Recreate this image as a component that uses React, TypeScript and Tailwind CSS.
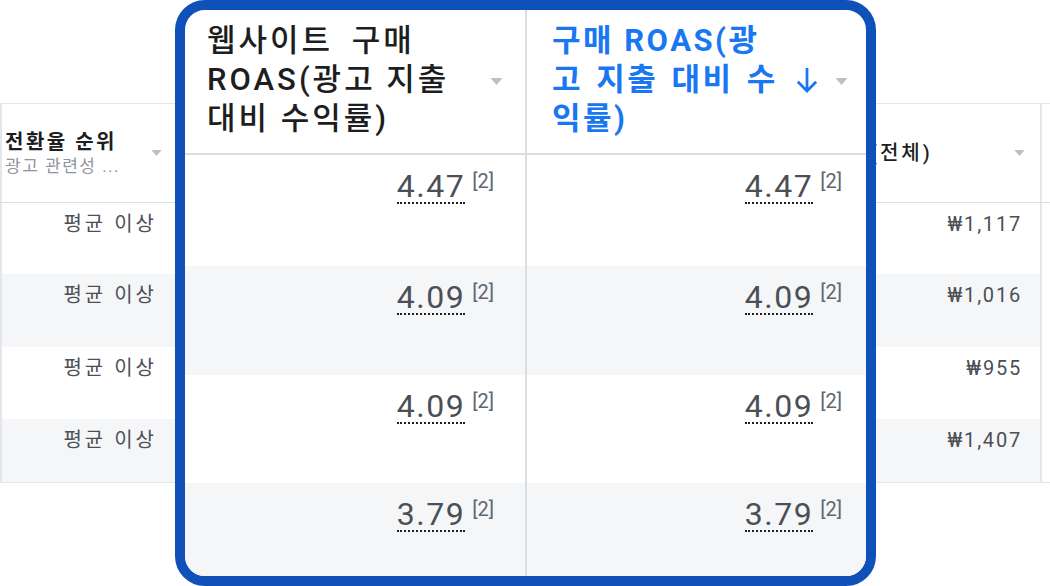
import React from "react";

type BgRow = { rank: string; cost: string; gray: boolean; h: string };
type ZoomRow = { value: string; gray: boolean; h: string };

const bgRows: BgRow[] = [
  { rank: "평균 이상", cost: "₩1,117", gray: false, h: "h-[71px]" },
  { rank: "평균 이상", cost: "₩1,016", gray: true, h: "h-[73px]" },
  { rank: "평균 이상", cost: "₩955", gray: false, h: "h-[72px]" },
  { rank: "평균 이상", cost: "₩1,407", gray: true, h: "h-[63px]" },
];

const zoomRows: ZoomRow[] = [
  { value: "4.47", gray: false, h: "h-[111px]" },
  { value: "4.09", gray: true, h: "h-[109px]" },
  { value: "4.09", gray: false, h: "h-[108px]" },
  { value: "3.79", gray: true, h: "flex-1" },
];

function Caret({ className }: { className?: string }) {
  return (
    <svg viewBox="0 0 12 7" className={className}>
      <path d="M0 0 L12 0 L6 7 Z" fill="#bcc0c4" />
    </svg>
  );
}

function Value({ value }: { value: string }) {
  return (
    <span className="flex items-start">
      <span className="inline-block leading-[31px] text-[32px] tracking-[1.5px] text-[#4b4f56] border-b-2 border-dotted border-[#1c1e21]">
        {value}
      </span>
      <span className="ml-[7px] text-[20px] leading-[22px] text-[#606770] -mt-[1px]">[2]</span>
    </span>
  );
}

export default function App() {
  return (
    <div className="relative w-[1050px] h-[586px] overflow-hidden bg-white font-['Roboto','Noto_Sans_CJK_KR',sans-serif]">
      {/* table behind the zoomed part */}
      <div className="pt-[103px]">
        <div className="w-[1050px] border-t border-b border-[#e4e6eb]">
          <div className="flex h-[99px] border-b border-[#dadde1]">
            <div className="w-[178px] border-l-2 border-[#e4e6eb] flex items-center pl-[3px] pr-[16px]">
              <div className="flex-1">
                <div className="text-[20px] leading-[25px] font-bold tracking-[2.5px] text-[#1c1e21]">전환율 순위</div>
                <div className="text-[17px] leading-[22px] tracking-[1.5px] text-[#90949c]">광고 관련성 ...</div>
              </div>
              <Caret className="w-[11px] h-[6px]" />
            </div>
            <div className="w-[690px]" />
            <div className="w-[174px] border-r-2 border-[#e4e6eb] flex items-center pl-[2px] pr-[15px]">
              <div className="flex-1 text-[20px] font-medium tracking-[3px] text-[#1c1e21]">(전체)</div>
              <Caret className="w-[11px] h-[6px]" />
            </div>
            <div className="flex-1" />
          </div>
          {bgRows.map((r, i) => (
            <div key={i} className={`flex ${r.h} ${r.gray ? "bg-[#f5f6f7]" : "bg-white"}`}>
              <div className="w-[178px] border-l-2 border-[#e4e6eb] pr-[21px] pt-[9px] text-right text-[20px] leading-[24px] tracking-[3px] text-[#4b4f56]">
                {r.rank}
              </div>
              <div className="w-[690px]" />
              <div className="w-[174px] border-r-2 border-[#e4e6eb] pr-[18px] pt-[9px] text-right text-[20px] leading-[24px] tracking-[1.8px] text-[#4b4f56]">
                {r.cost}
              </div>
              <div className="flex-1 bg-white" />
            </div>
          ))}
        </div>
      </div>

      {/* zoomed ROAS columns */}
      <div className="absolute left-[175px] top-0 w-[701px] h-[586px] flex flex-col rounded-[30px] border-[10px] border-[#0f50b9] bg-white overflow-hidden">
        <div className="flex h-[145px] border-b-2 border-[#dadde1]">
          <div className="w-[342px] border-r-2 border-[#dadde1] flex pl-[22px] pr-[22px]">
            <div className="flex-1 pt-[11px] text-[31px] leading-[39px] font-medium tracking-[3px] text-[#1c1e21]">
              <span className="[word-spacing:8px]">웹사이트 구매</span>
              <br />
              ROAS(광고 지출
              <br />
              대비 수익률)
            </div>
            <div className="flex items-center">
              <Caret className="w-[13px] h-[7px]" />
            </div>
          </div>
          <div className="flex-1 flex pl-[25px] pr-[18px]">
            <div className="flex-1 pt-[11px] text-[31px] leading-[39px] font-bold tracking-[2.5px] text-[#1a77f2]">
              구매 ROAS(광
              <br />
              <span className="inline-flex items-center [word-spacing:3px]">
                고 지출 대비 수
                <svg viewBox="0 0 24 28" className="ml-[18px] w-[22px] h-[26px]">
                  <path d="M12 1 V26 M2 16 L12 26 L22 16" fill="none" stroke="#1a77f2" strokeWidth="3" />
                </svg>
              </span>
              <br />
              익률)
            </div>
            <div className="flex items-center">
              <Caret className="w-[13px] h-[7px]" />
            </div>
          </div>
        </div>
        {zoomRows.map((r, i) => (
          <div key={i} className={`flex ${r.h} ${r.gray ? "bg-[#f5f6f7]" : "bg-white"}`}>
            <div className="w-[342px] border-r-2 border-[#dadde1] flex justify-end pr-[31px] pt-[16px]">
              <Value value={r.value} />
            </div>
            <div className="flex-1 flex justify-end pr-[24px] pt-[16px]">
              <Value value={r.value} />
            </div>
          </div>
        ))}
      </div>
    </div>
  );
}
